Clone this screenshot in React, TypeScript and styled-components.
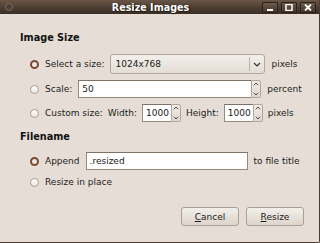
import React from 'react'
import styled, { createGlobalStyle } from 'styled-components'

const Global = createGlobalStyle`
  html, body {
    margin: 0;
    padding: 0;
    background: #e6ded6;
  }
  body {
    font-family: 'DejaVu Sans', 'Liberation Sans', sans-serif;
    font-size: 9px;
    color: #1a1a1a;
  }
`

const Window = styled.div`
  width: 320px;
  height: 243px;
  box-sizing: border-box;
  border-right: 1px solid #4a3e34;
  border-bottom: 1px solid #4a3e34;
  border-bottom-right-radius: 2px;
  background: #e6ded6;
  display: flex;
  flex-direction: column;
  overflow: hidden;
`

const TitleBar = styled.div`
  height: 14px;
  flex: none;
  display: flex;
  align-items: center;
  padding: 0 3px 0 5px;
  background: linear-gradient(#6a5647, #4a3b30 60%, #3b2f26);
`

const MenuDot = styled.div`
  width: 6px;
  height: 6px;
  border-radius: 50%;
  border: 1px solid #7d6b5e;
  background: #4d3e33;
`

const Title = styled.div`
  flex: 1;
  text-align: center;
  font-weight: bold;
  font-size: 9.6px;
  color: #ffffff;
  text-shadow: 0 1px 1px #1e150f, 1px 0 1px #1e150f;
  padding-left: 26px;
`

const Controls = styled.div`
  display: flex;
  gap: 3px;
`

const CtlButton = styled.div`
  width: 14px;
  height: 9px;
  border: 1px solid #2a211b;
  border-radius: 1px;
  background: linear-gradient(#6d5a4c, #45372d);
  display: flex;
  align-items: center;
  justify-content: center;
`

const Body = styled.div`
  flex: 1;
  display: flex;
  flex-direction: column;
  padding: 18px 0 0 20px;
`

const Heading = styled.div<{ $top?: number }>`
  font-weight: bold;
  font-size: 9.7px;
  color: #111;
  line-height: 12px;
  margin-top: ${p => p.$top ?? 0}px;
`

const Options = styled.div<{ $top: number }>`
  display: flex;
  flex-direction: column;
  padding-left: 10px;
  margin-top: ${p => p.$top}px;
`

const Row = styled.div<{ $h: number; $gap?: number; $space?: number }>`
  display: flex;
  align-items: center;
  gap: ${p => p.$space ?? 6}px;
  height: ${p => p.$h}px;
  margin-top: ${p => p.$gap ?? 0}px;
  white-space: nowrap;
`

const Radio = styled.span<{ $on?: boolean }>`
  width: 9px;
  height: 9px;
  box-sizing: border-box;
  border-radius: 50%;
  flex: none;
  margin-right: ${p => (p.$on ? 0 : 0)}px;
  border: ${p => (p.$on ? '2.5px solid #7a4a33' : '1px solid #a99d92')};
  background: ${p => (p.$on ? '#efe7e0' : 'linear-gradient(#ffffff, #ece7e2)')};
`

const Label = styled.span<{ $ml?: number }>`
  color: #1c1c1c;
  margin-left: ${p => p.$ml ?? 0}px;
`

const Combo = styled.div`
  width: 155px;
  height: 20px;
  box-sizing: border-box;
  border: 1px solid #b3a799;
  border-radius: 3px;
  background: linear-gradient(#f3efeb, #e4ddd6);
  display: flex;
  align-items: center;
`

const ComboText = styled.span`
  flex: 1;
  padding-left: 4px;
`

const ComboArrow = styled.span`
  width: 14px;
  height: 14px;
  border-left: 1px solid #bdb2a6;
  display: flex;
  align-items: center;
  justify-content: center;
`

const Entry = styled.div<{ $w: number }>`
  width: ${p => p.$w}px;
  height: 100%;
  box-sizing: border-box;
  border: 1px solid #968a7f;
  border-top-color: #7e7268;
  background: #fff;
  display: flex;
  align-items: center;
  padding-left: 3px;
`

const SpinWrap = styled.div<{ $w: number }>`
  width: ${p => p.$w}px;
  height: 100%;
  display: flex;
`

const SpinField = styled.div`
  flex: 1;
  min-width: 0;
  box-sizing: border-box;
  border: 1px solid #968a7f;
  border-top-color: #7e7268;
  border-right: none;
  background: #fff;
  display: flex;
  align-items: center;
  padding-left: 3px;
  overflow: hidden;
`

const SpinButtons = styled.div`
  width: 10px;
  flex: none;
  box-sizing: border-box;
  border: 1px solid #b3a799;
  border-radius: 0 2px 2px 0;
  background: linear-gradient(#f1ece7, #e0d8d0);
  display: flex;
  flex-direction: column;
  align-items: center;
  justify-content: space-between;
  padding: 1px 0;
`

const Footer = styled.div`
  display: flex;
  justify-content: flex-end;
  gap: 7px;
  margin-top: 18px;
  padding-right: 15px;
`

const Button = styled.div`
  width: 58px;
  height: 19px;
  box-sizing: border-box;
  border: 1px solid #ab9f93;
  border-radius: 3px;
  background: linear-gradient(#f2eee9, #ddd5cc);
  display: flex;
  align-items: center;
  justify-content: center;
  color: #1c1c1c;
`

const Up = () => (
  <svg width="6" height="4" viewBox="0 0 6 4">
    <path d="M0.8 3.3 L3 1 L5.2 3.3" fill="none" stroke="#3a3a3a" strokeWidth="0.9" />
  </svg>
)

const Down = () => (
  <svg width="6" height="4" viewBox="0 0 6 4">
    <path d="M0.8 0.7 L3 3 L5.2 0.7" fill="none" stroke="#3a3a3a" strokeWidth="0.9" />
  </svg>
)

const Spin = ({ w, value }: { w: number; value: string }) => (
  <SpinWrap $w={w}>
    <SpinField>{value}</SpinField>
    <SpinButtons>
      <Up />
      <Down />
    </SpinButtons>
  </SpinWrap>
)

export default function App() {
  return (
    <>
      <Global />
      <Window>
        <TitleBar>
          <MenuDot />
          <Title>Resize Images</Title>
          <Controls>
            <CtlButton>
              <svg width="8" height="7" viewBox="0 0 8 7">
                <rect x="1" y="5" width="6" height="2" fill="#fff" />
              </svg>
            </CtlButton>
            <CtlButton>
              <svg width="8" height="7" viewBox="0 0 8 7">
                <rect x="1" y="0.5" width="6" height="6" fill="none" stroke="#fff" strokeWidth="1.5" />
              </svg>
            </CtlButton>
            <CtlButton>
              <svg width="8" height="7" viewBox="0 0 8 7">
                <path d="M1 0.5 L7 6.5 M7 0.5 L1 6.5" stroke="#fff" strokeWidth="1.8" />
              </svg>
            </CtlButton>
          </Controls>
        </TitleBar>
        <Body>
          <Heading>Image Size</Heading>
          <Options $top={10}>
            <Row $h={20}>
              <Radio $on />
              <Label>Select a size:</Label>
              <Combo>
                <ComboText>1024x768</ComboText>
                <ComboArrow>
                  <svg width="8" height="5" viewBox="0 0 8 5">
                    <path d="M1 1 L4 4 L7 1" fill="none" stroke="#2e2e2e" strokeWidth="1.1" />
                  </svg>
                </ComboArrow>
              </Combo>
              <Label>pixels</Label>
            </Row>
            <Row $h={18} $gap={6}>
              <Radio />
              <Label>Scale:</Label>
              <Spin w={183} value="50" />
              <Label>percent</Label>
            </Row>
            <Row $h={18} $gap={6} $space={5}>
              <Radio />
              <Label $ml={1}>Custom size:</Label>
              <Label>Width:</Label>
              <Spin w={39} value="1000" />
              <Label>Height:</Label>
              <Spin w={39} value="1000" />
              <Label>pixels</Label>
            </Row>
          </Options>
          <Heading $top={9}>Filename</Heading>
          <Options $top={9}>
            <Row $h={18}>
              <Radio $on />
              <Label>Append</Label>
              <Entry $w={162}>.resized</Entry>
              <Label>to file title</Label>
            </Row>
            <Row $h={14} $gap={5}>
              <Radio />
              <Label>Resize in place</Label>
            </Row>
          </Options>
          <Footer>
            <Button>
              <span>
                <u>C</u>ancel
              </span>
            </Button>
            <Button>
              <span>
                <u>R</u>esize
              </span>
            </Button>
          </Footer>
        </Body>
      </Window>
    </>
  )
}
